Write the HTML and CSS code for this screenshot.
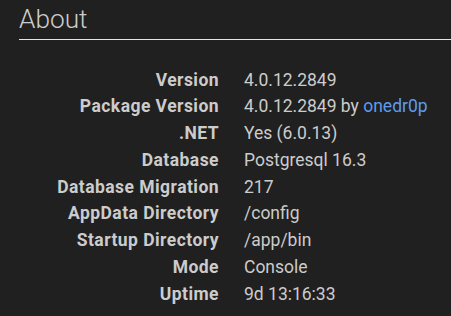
FILE: index.html
```html
<!DOCTYPE html>
<html lang="en">
<head>
  <meta charset="UTF-8">
  <meta name="viewport" content="width=device-width, initial-scale=1.0">
  <title>About</title>
  <link rel="stylesheet" href="styles.css">
</head>
<body>

  <div class="page-content">
    <fieldset class="about-section">
      <legend class="section-legend">About</legend>

      <dl class="description-list">
        <dt class="item-title">Version</dt>
        <dd class="item-value">4.0.12.2849</dd>

        <dt class="item-title">Package Version</dt>
        <dd class="item-value">4.0.12.2849 by <a href="#" class="item-link">onedr0p</a></dd>

        <dt class="item-title">.NET</dt>
        <dd class="item-value">Yes (6.0.13)</dd>

        <dt class="item-title">Database</dt>
        <dd class="item-value">Postgresql 16.3</dd>

        <dt class="item-title">Database Migration</dt>
        <dd class="item-value">217</dd>

        <dt class="item-title">AppData Directory</dt>
        <dd class="item-value">/config</dd>

        <dt class="item-title">Startup Directory</dt>
        <dd class="item-value">/app/bin</dd>

        <dt class="item-title">Mode</dt>
        <dd class="item-value">Console</dd>

        <dt class="item-title">Uptime</dt>
        <dd class="item-value">9d 13:16:33</dd>
      </dl>
    </fieldset>
  </div>

</body>
</html>
```

FILE: styles.css
```css
/* Dark theme colours */
:root {
  --background: #202020;
  --text-color: #cccccc;
  --legend-color: #cccccc;
  --border-color: #e5e5e5;
  --link-color: #5d9cec;
}

html,
body {
  margin: 0;
  padding: 0;
  background-color: var(--background);
  overflow: hidden;
}

body {
  font-family: Roboto, "Open Sans", "Liberation Sans", sans-serif;
  font-size: 17.5px;
  color: var(--text-color);
}

.page-content {
  padding: 1px 0 0 19px;
}

.about-section {
  margin: 0;
  padding: 0;
  border: none;
  min-width: 0;
}

.section-legend {
  display: block;
  box-sizing: border-box;
  width: 100%;
  padding: 0;
  margin-bottom: 27px;
  border-bottom: 1px solid var(--border-color);
  color: var(--legend-color);
  font-size: 26.25px;
  font-weight: 300;
  line-height: 37.5px;
}

.description-list {
  display: grid;
  grid-template-columns: 200px 1fr;
  column-gap: 25px;
  margin: 0;
  line-height: 26.75px;
}

.item-title {
  text-align: right;
  font-weight: bold;
  letter-spacing: 0.45px;
  white-space: nowrap;
  overflow: hidden;
}

.item-value {
  margin: 0;
  white-space: nowrap;
}

.item-link {
  color: var(--link-color);
  text-decoration: none;
}
```
